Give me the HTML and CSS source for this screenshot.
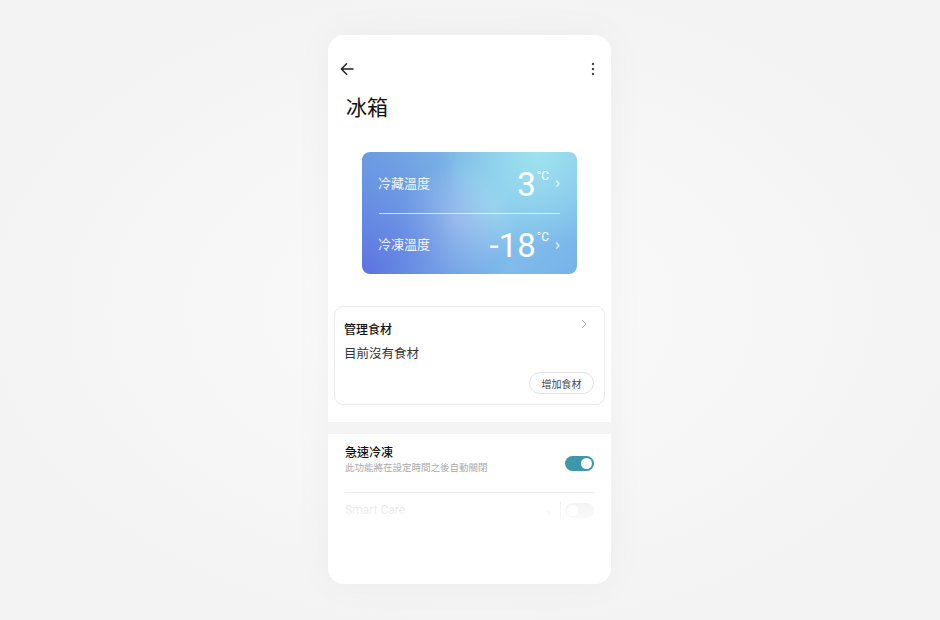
FILE: index.html
```html
<!DOCTYPE html>
<html lang="zh-Hant">
<head>
  <meta charset="UTF-8">
  <title>冰箱</title>
  <link rel="stylesheet" href="styles.css">
</head>
<body>

  <div class="phone">
    <div class="topbar">
      <svg class="icon" width="14" height="14" viewBox="0 0 14 14">
        <path d="M13 7H1.8M6.6 1.8L1.4 7l5.2 5.2" fill="none" stroke="#222" stroke-width="1.5" stroke-linecap="round" stroke-linejoin="round"/>
      </svg>
      <svg class="icon" width="4" height="14" viewBox="0 0 4 14">
        <circle cx="2" cy="2" r="1.2" fill="#444"/>
        <circle cx="2" cy="7" r="1.2" fill="#444"/>
        <circle cx="2" cy="12" r="1.2" fill="#444"/>
      </svg>
    </div>

    <h1 class="title">冰箱</h1>

    <div class="temp-card">
      <div class="temp-row">
        <span class="temp-label">冷藏溫度</span>
        <span class="temp-value">3<sup>°C</sup></span>
        <span class="temp-chev">›</span>
      </div>
      <div class="temp-divider"></div>
      <div class="temp-row">
        <span class="temp-label">冷凍溫度</span>
        <span class="temp-value">-18<sup>°C</sup></span>
        <span class="temp-chev">›</span>
      </div>
    </div>

    <div class="food-card">
      <div class="food-head">
        <span class="food-title">管理食材</span>
        <svg width="8" height="12" viewBox="0 0 8 12">
          <path d="M2 2l4 4-4 4" fill="none" stroke="#bbb" stroke-width="1"/>
        </svg>
      </div>
      <div class="food-empty">目前沒有食材</div>
      <div class="food-actions">
        <button class="pill">增加食材</button>
      </div>
    </div>

    <div class="band"></div>

    <div class="settings">
      <div class="setting">
        <div class="setting-text">
          <div class="setting-name">急速冷凍</div>
          <div class="setting-desc">此功能將在設定時間之後自動關閉</div>
        </div>
        <div class="toggle on"></div>
      </div>
      <div class="setting faded">
        <div class="setting-text">
          <div class="setting-name light">Smart Care</div>
        </div>
        <span class="setting-chev">›</span>
        <span class="vline"></span>
        <div class="toggle off"></div>
      </div>
    </div>
  </div>

</body>
</html>
```

FILE: styles.css
```css
body {
  margin: 0;
  height: 620px;
  background: radial-gradient(ellipse at center, #fbfbfb 0%, #f3f3f3 75%);
  font-family: "Noto Sans CJK TC", "Noto Sans", sans-serif;
  display: flex;
  justify-content: center;
  padding-top: 35px;
  box-sizing: border-box;
}

.phone {
  width: 283px;
  height: 549px;
  background: #fff;
  border-radius: 16px;
  box-shadow: 0 0 40px rgba(0, 0, 0, 0.04);
  overflow: hidden;
  margin-left: -1px;
}

.topbar {
  display: flex;
  justify-content: space-between;
  align-items: center;
  padding: 27px 16px 0 12px;
  height: 14px;
}

.title {
  margin: 15px 0 0 18px;
  font-size: 21px;
  font-weight: 400;
  color: #111;
  line-height: 30px;
}

.temp-card {
  margin: 31px auto 0;
  width: 215px;
  height: 122px;
  border-radius: 8px;
  box-sizing: border-box;
  padding: 0 17px 0 16px;
  color: #fff;
  background:
    radial-gradient(circle at 82% 0%, rgba(160, 230, 240, 0.9) 0%, rgba(160, 230, 240, 0) 45%),
    radial-gradient(circle at 0% 100%, rgba(90, 110, 225, 0.95) 0%, rgba(90, 110, 225, 0) 60%),
    radial-gradient(circle at 45% 55%, rgba(205, 228, 246, 0.55) 0%, rgba(205, 228, 246, 0) 42%),
    linear-gradient(135deg, #6ea4e2 0%, #88c6ea 55%, #76b2ea 100%);
  display: flex;
  flex-direction: column;
}

.temp-row {
  flex: 1;
  display: flex;
  align-items: center;
}

.temp-label {
  flex: 1;
  font-size: 13px;
  opacity: 0.92;
}

.temp-value {
  font-family: Roboto, "Noto Sans", sans-serif;
  font-size: 33px;
  font-weight: 400;
  line-height: 1;
  position: relative;
  top: 2px;
}

.temp-value sup {
  font-size: 12px;
  vertical-align: top;
  position: relative;
  top: 2px;
  margin-left: 1px;
}

.temp-chev {
  font-family: "Noto Sans", sans-serif;
  font-size: 16px;
  margin-left: 6px;
  opacity: 0.8;
}

.temp-divider {
  height: 1px;
  background: rgba(255, 255, 255, 0.7);
  margin: 0 0 0 1px;
}

.food-card {
  margin: 32px 6px 0;
  border: 1px solid #ececec;
  border-radius: 9px;
  height: 99px;
  box-sizing: border-box;
  padding: 10px 10px 0 9px;
}

.food-head {
  display: flex;
  justify-content: space-between;
  align-items: flex-start;
}

.food-head svg {
  margin-top: 1px;
  margin-right: 6px;
}

.food-title {
  font-size: 12px;
  font-weight: 500;
  color: #111;
  margin-top: 3px;
}

.food-empty {
  font-size: 12.5px;
  color: #333;
  margin-top: 6px;
}

.food-actions {
  display: flex;
  justify-content: flex-end;
  margin-top: 10px;
}

.pill {
  font-family: inherit;
  font-size: 10px;
  color: #444;
  background: #fff;
  border: 1px solid #e3e3e3;
  border-radius: 11px;
  height: 22px;
  width: 65px;
  padding: 0;
}

.band {
  height: 12px;
  background: #f4f4f4;
  margin-top: 17px;
}

.settings {
  padding: 0 16px 0 17px;
  position: relative;
}

.setting {
  display: flex;
  align-items: center;
  height: 58px;
  border-bottom: 1px solid #eeeeee;
}

.setting-text {
  flex: 1;
  padding-bottom: 9px;
}

.setting-name {
  font-size: 12px;
  font-weight: 500;
  color: #111;
}

.setting-desc {
  font-size: 9.5px;
  color: #aaa;
  margin-top: 0;
}

.toggle {
  width: 29px;
  height: 15px;
  border-radius: 8px;
  position: relative;
  margin-right: 1px;
}

.toggle::after {
  content: "";
  position: absolute;
  top: 2px;
  width: 11px;
  height: 11px;
  border-radius: 50%;
  background: #fff;
}

.toggle.on {
  background: #3f98a8;
}

.toggle.on::after {
  right: 2px;
}

.toggle.off {
  background: #ececec;
}

.toggle.off::after {
  left: 2px;
}

.setting.faded {
  border-bottom: none;
  height: 34px;
  align-items: center;
}

.setting.faded .setting-text {
  padding-bottom: 0;
}

.setting-name.light {
  font-family: Roboto, sans-serif;
  font-weight: 400;
  color: #d4d4d4;
  font-size: 12px;
}

.setting-chev {
  color: #ddd;
  font-size: 12px;
  margin-right: 10px;
}

.vline {
  width: 1px;
  height: 16px;
  background: #e4e4e4;
  margin-right: 4px;
}

.settings::after {
  content: "";
  position: absolute;
  left: 0;
  right: 0;
  bottom: 0;
  height: 30px;
  background: linear-gradient(rgba(255, 255, 255, 0.3), rgba(255, 255, 255, 0.9));
}
```
